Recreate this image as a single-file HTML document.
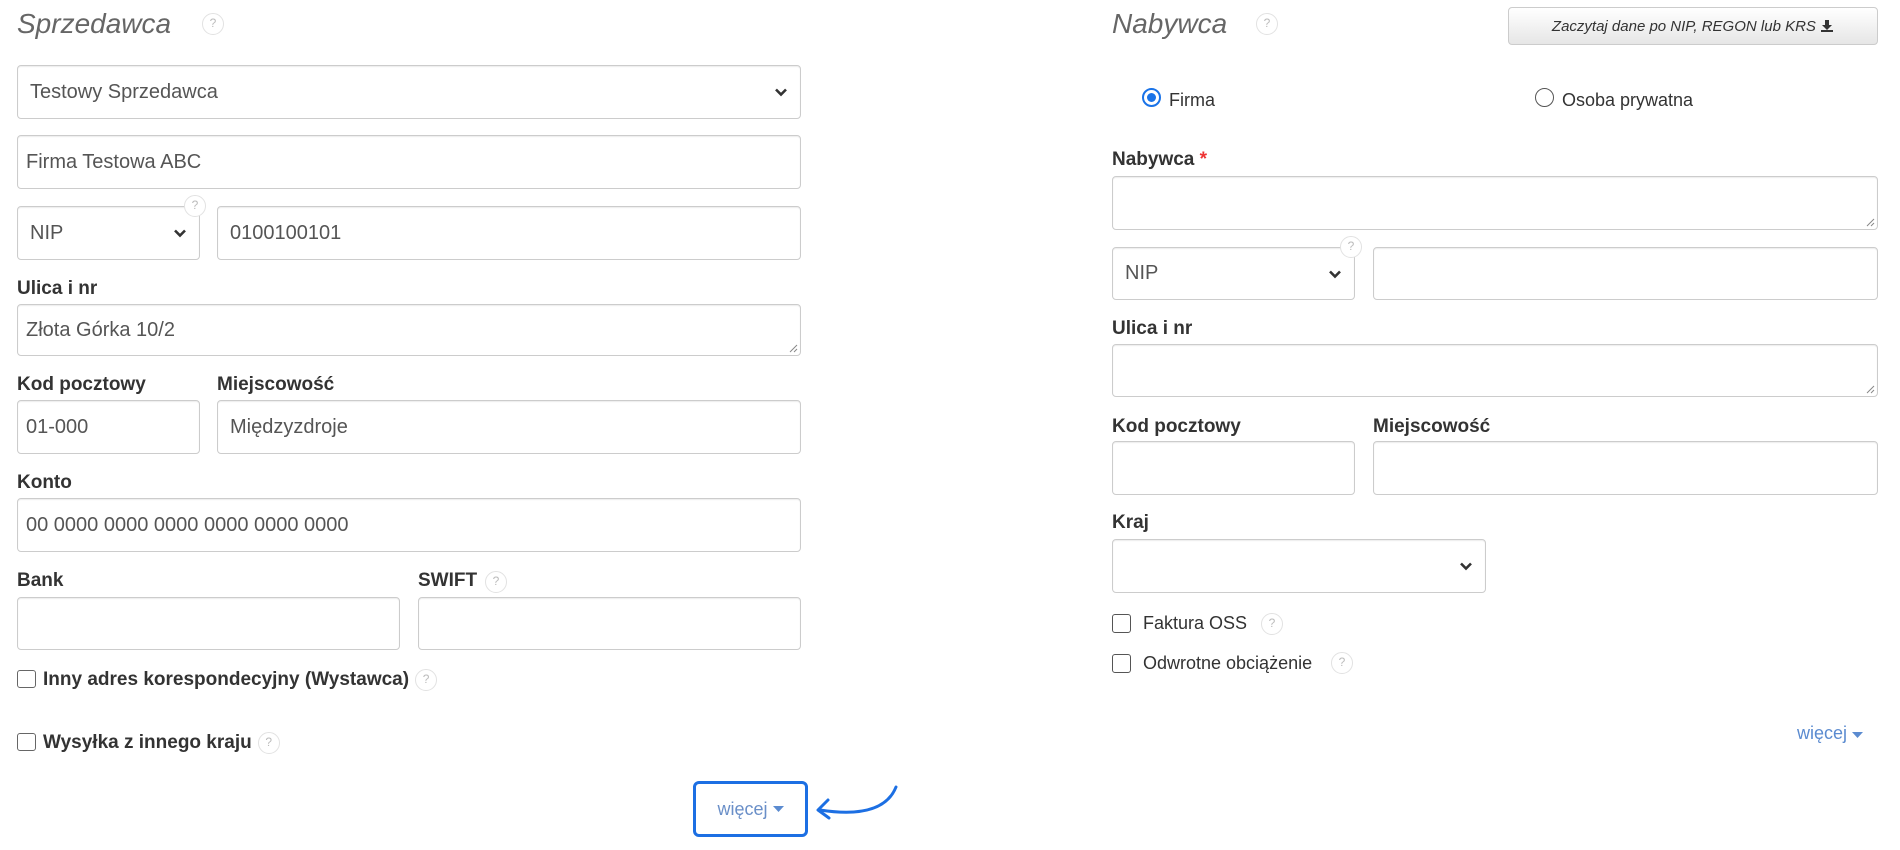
<!DOCTYPE html>
<html><head><meta charset="utf-8"><style>
*{box-sizing:border-box;margin:0;padding:0}
body{width:1900px;height:850px;background:#fff;font-family:"Liberation Sans",Arial,sans-serif;color:#333;position:relative;overflow:hidden}
.a{position:absolute}
.t{font-size:28px;font-style:italic;color:#666;line-height:30px}
.h{position:absolute;width:22px;height:22px;border:1.5px solid #e2e2e2;border-radius:50%;color:#bbb;font-size:12px;text-align:center;line-height:19px;background:#fff;font-weight:normal;font-style:normal}
.hi{display:inline-block;vertical-align:middle;width:22px;height:22px;border:1.5px solid #e2e2e2;border-radius:50%;color:#bbb;font-size:12px;text-align:center;line-height:19px;background:#fff;font-weight:normal;margin-left:6px}
.in{position:absolute;border:1px solid #ccc;border-radius:4px;box-shadow:inset 0 1px 1px rgba(0,0,0,.075);font-size:20px;color:#555;padding-left:12px;display:flex;align-items:center;background:#fff}
.lb{position:absolute;font-weight:bold;font-size:19px;color:#333;line-height:20px}
.ch{position:absolute;right:12px;top:50%;margin-top:-7px}
.rs{position:absolute;right:2px;bottom:2px;width:10px;height:10px}
.cb{position:absolute;width:19px;height:19px;border:1.5px solid #666;border-radius:3px;background:#fff}
</style></head><body>
<svg width="0" height="0" style="position:absolute"><defs>
<symbol id="chev" viewBox="0 0 14 14"><path d="M2 4.5 L7 9.5 L12 4.5" fill="none" stroke="#333" stroke-width="2.6"/></symbol>
<symbol id="rsz" viewBox="0 0 10 10"><path d="M9 2 L2 9 M9 6 L6 9" stroke="#888" stroke-width="1"/></symbol>
</defs></svg>

<!-- LEFT -->
<div class="a t" style="left:17px;top:9px">Sprzedawca</div>
<div class="h" style="left:202px;top:13px">?</div>

<div class="in" style="left:17px;top:65px;width:784px;height:54px">Testowy Sprzedawca<svg class="ch" width="14" height="14"><use href="#chev"/></svg></div>
<div class="in" style="left:17px;top:135px;width:784px;height:54px;padding-left:8px">Firma Testowa ABC</div>
<div class="in" style="left:17px;top:206px;width:183px;height:54px">NIP<svg class="ch" width="14" height="14"><use href="#chev"/></svg></div>
<div class="h" style="left:184px;top:195px">?</div>
<div class="in" style="left:217px;top:206px;width:584px;height:54px">0100100101</div>

<div class="lb" style="left:17px;top:279px">Ulica i nr</div>
<div class="in" style="left:17px;top:304px;width:784px;height:52px;padding-left:8px">Złota Górka 10/2<svg class="rs"><use href="#rsz"/></svg></div>

<div class="lb" style="left:17px;top:375px">Kod pocztowy</div>
<div class="lb" style="left:217px;top:375px">Miejscowość</div>
<div class="in" style="left:17px;top:400px;width:183px;height:54px;padding-left:8px">01-000</div>
<div class="in" style="left:217px;top:400px;width:584px;height:54px">Międzyzdroje</div>

<div class="lb" style="left:17px;top:473px">Konto</div>
<div class="in" style="left:17px;top:498px;width:784px;height:54px;padding-left:8px">00 0000 0000 0000 0000 0000 0000</div>

<div class="lb" style="left:17px;top:571px">Bank</div>
<div class="lb" style="left:418px;top:571px">SWIFT</div>
<div class="h" style="left:485px;top:571px">?</div>
<div class="in" style="left:17px;top:597px;width:383px;height:53px"></div>
<div class="in" style="left:418px;top:597px;width:383px;height:53px"></div>

<div class="cb" style="left:17px;top:670px;width:19px;height:18px"></div>
<div class="lb" style="left:43px;top:669px">Inny adres korespondecyjny (Wystawca)<span class="hi">?</span></div>

<div class="cb" style="left:17px;top:733px;width:19px;height:18px"></div>
<div class="lb" style="left:43px;top:732px">Wysyłka z innego kraju<span class="hi">?</span></div>

<div class="a" style="left:693px;top:781px;width:115px;height:56px;border:3px solid #1c6fe3;border-radius:6px;display:flex;align-items:center;justify-content:center;font-size:18px;color:#6a8fc8">więcej&nbsp;<svg width="11" height="7"><path d="M0 0 L11 0 L5.5 6z" fill="#5b8bd0"/></svg></div>
<svg class="a" style="left:810px;top:782px" width="95" height="45"><path d="M86 5 C78 25 55 35 10 28" fill="none" stroke="#1c6fe3" stroke-width="3" stroke-linecap="round"/><path d="M18 18 L8 28 L19 36" fill="none" stroke="#1c6fe3" stroke-width="3" stroke-linecap="round" stroke-linejoin="round"/></svg>

<!-- RIGHT -->
<div class="a t" style="left:1112px;top:9px">Nabywca</div>
<div class="h" style="left:1256px;top:13px">?</div>
<div class="a" style="left:1508px;top:7px;width:370px;height:38px;border:1px solid #ccc;border-radius:4px;background:linear-gradient(#fff,#e6e6e6);font-size:15px;font-style:italic;color:#333;display:flex;align-items:center;justify-content:center">Zaczytaj dane po NIP, REGON lub KRS&nbsp;<svg width="14" height="14"><path d="M5 1h4v5h3l-5 5-5-5h3z M1 11v2h12v-2z" fill="#333"/></svg></div>

<div class="a" style="left:1142px;top:88px;width:19px;height:19px;border-radius:50%;border:2px solid #1a73e8;background:#fff"><div style="position:absolute;left:3px;top:3px;width:9px;height:9px;border-radius:50%;background:#1a73e8"></div></div>
<div class="a" style="left:1169px;top:90px;font-size:18px">Firma</div>
<div class="a" style="left:1535px;top:88px;width:19px;height:19px;border-radius:50%;border:1.5px solid #555"></div>
<div class="a" style="left:1562px;top:90px;font-size:18px">Osoba prywatna</div>

<div class="lb" style="left:1112px;top:150px">Nabywca <span style="color:#e33">*</span></div>
<div class="in" style="left:1112px;top:176px;width:766px;height:54px"><svg class="rs"><use href="#rsz"/></svg></div>
<div class="in" style="left:1112px;top:247px;width:243px;height:53px">NIP<svg class="ch" width="14" height="14"><use href="#chev"/></svg></div>
<div class="h" style="left:1340px;top:236px">?</div>
<div class="in" style="left:1373px;top:247px;width:505px;height:53px"></div>

<div class="lb" style="left:1112px;top:319px">Ulica i nr</div>
<div class="in" style="left:1112px;top:344px;width:766px;height:53px"><svg class="rs"><use href="#rsz"/></svg></div>

<div class="lb" style="left:1112px;top:417px">Kod pocztowy</div>
<div class="lb" style="left:1373px;top:417px">Miejscowość</div>
<div class="in" style="left:1112px;top:441px;width:243px;height:54px"></div>
<div class="in" style="left:1373px;top:441px;width:505px;height:54px"></div>

<div class="lb" style="left:1112px;top:513px">Kraj</div>
<div class="in" style="left:1112px;top:539px;width:374px;height:54px"><svg class="ch" width="14" height="14"><use href="#chev"/></svg></div>

<div class="cb" style="left:1112px;top:614px;border-color:#555"></div>
<div class="a" style="left:1143px;top:613px;font-size:18px;color:#333">Faktura OSS</div>
<div class="h" style="left:1261px;top:613px">?</div>
<div class="cb" style="left:1112px;top:654px;border-color:#555"></div>
<div class="a" style="left:1143px;top:653px;font-size:18px;color:#333">Odwrotne obciążenie</div>
<div class="h" style="left:1331px;top:652px">?</div>

<div class="a" style="left:1797px;top:723px;font-size:18px;color:#5b8bd0">więcej <svg width="11" height="7"><path d="M0 0 L11 0 L5.5 6z" fill="#5b8bd0"/></svg></div>
</body></html>
